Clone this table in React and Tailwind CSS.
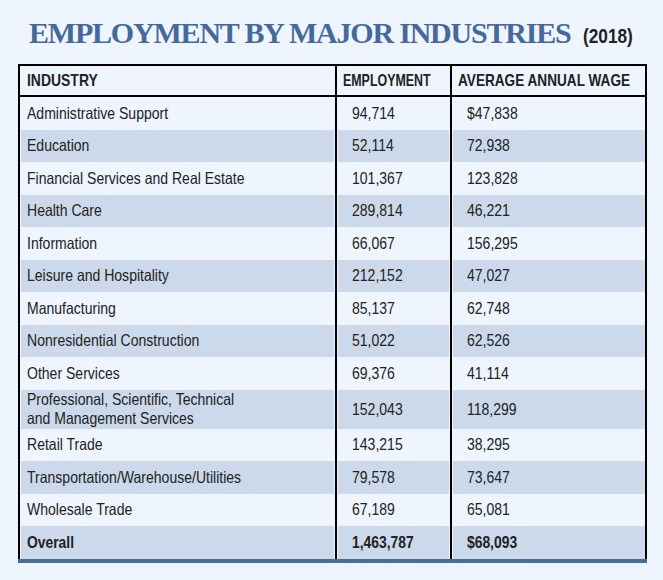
const rows = [
	['Administrative Support', '94,714', '$47,838'],
	['Education', '52,114', '72,938'],
	['Financial Services and Real Estate', '101,367', '123,828'],
	['Health Care', '289,814', '46,221'],
	['Information', '66,067', '156,295'],
	['Leisure and Hospitality', '212,152', '47,027'],
	['Manufacturing', '85,137', '62,748'],
	['Nonresidential Construction', '51,022', '62,526'],
	['Other Services', '69,376', '41,114'],
	['Professional, Scientific, Technical\nand Management Services', '152,043', '118,299'],
	['Retail Trade', '143,215', '38,295'],
	['Transportation/Warehouse/Utilities', '79,578', '73,647'],
	['Wholesale Trade', '67,189', '65,081'],
];

// no condensed face is installed, so squeeze Liberation Sans horizontally
const Narrow = ({ children, bold }) => (
	<span
		className={`inline-block origin-left whitespace-pre-line ${
			bold ? 'font-bold scale-x-[0.84]' : 'scale-x-[0.85]'
		}`}
	>
		{children}
	</span>
);

const Row = ({ cells, striped, bold, tall }) => {
	const h = tall ? 'h-[39px]' : 'h-[32.5px]';
	const bg = striped ? 'bg-[#cbd9ea]' : 'bg-[#eef5fe]';
	return (
		<div className={`grid grid-cols-[317px_115px_194px] ${h}`}>
			<div className="border-r-2 border-black px-px">
				<div className={`h-full ${bg} flex items-center pl-[6px] leading-[19px] whitespace-nowrap`}>
					<Narrow bold={bold}>{cells[0]}</Narrow>
				</div>
			</div>
			<div className="border-r-2 border-black px-px">
				<div className={`h-full ${bg} flex items-center pl-[14px] whitespace-nowrap`}>
					<Narrow bold={bold}>{cells[1]}</Narrow>
				</div>
			</div>
			<div className="px-px">
				<div className={`h-full ${bg} flex items-center pl-[14px] whitespace-nowrap`}>
					<Narrow bold={bold}>{cells[2]}</Narrow>
				</div>
			</div>
		</div>
	);
};

const App = () => {
	return (
		<div className="w-[663px] h-[580px] bg-[#eef5fe] text-[#222] font-['Liberation_Sans',sans-serif]">
			<h1 className="pt-[16px] pl-[29px] flex items-baseline h-[64px] whitespace-nowrap">
				<span className="font-['Liberation_Serif',serif] font-bold text-[30px] leading-[34px] text-[#46699b] tracking-[-1.2px]">
					EMPLOYMENT BY MAJOR INDUSTRIES
				</span>
				<span className="ml-[12px] inline-block origin-left scale-x-[0.82] font-bold text-[21px]">(2018)</span>
			</h1>

			<div className="ml-[18px] w-[629px]">
				<div className="border-2 border-b-0 border-black text-[16.5px]">
					<div className="grid grid-cols-[317px_115px_194px] h-[31px] border-b-2 border-black font-bold text-[17px] whitespace-nowrap">
						<div className="border-r-2 border-black flex items-center pl-[7px]">
							<span className="inline-block origin-left scale-x-[0.82]">INDUSTRY</span>
						</div>
						<div className="border-r-2 border-black flex items-center pl-[6px]">
							<span className="inline-block origin-left scale-x-[0.73]">EMPLOYMENT</span>
						</div>
						<div className="flex items-center pl-[6px]">
							<span className="inline-block origin-left scale-x-[0.8]">AVERAGE ANNUAL WAGE</span>
						</div>
					</div>
					{rows.map((r, i) => (
						<Row key={r[0]} cells={r} striped={i % 2 === 1} tall={i === 9} />
					))}
					<Row cells={['Overall', '1,463,787', '$68,093']} striped bold />
				</div>
				<div className="h-[4px] bg-[#4a6d96]" />
			</div>
		</div>
	);
};

export default App;
